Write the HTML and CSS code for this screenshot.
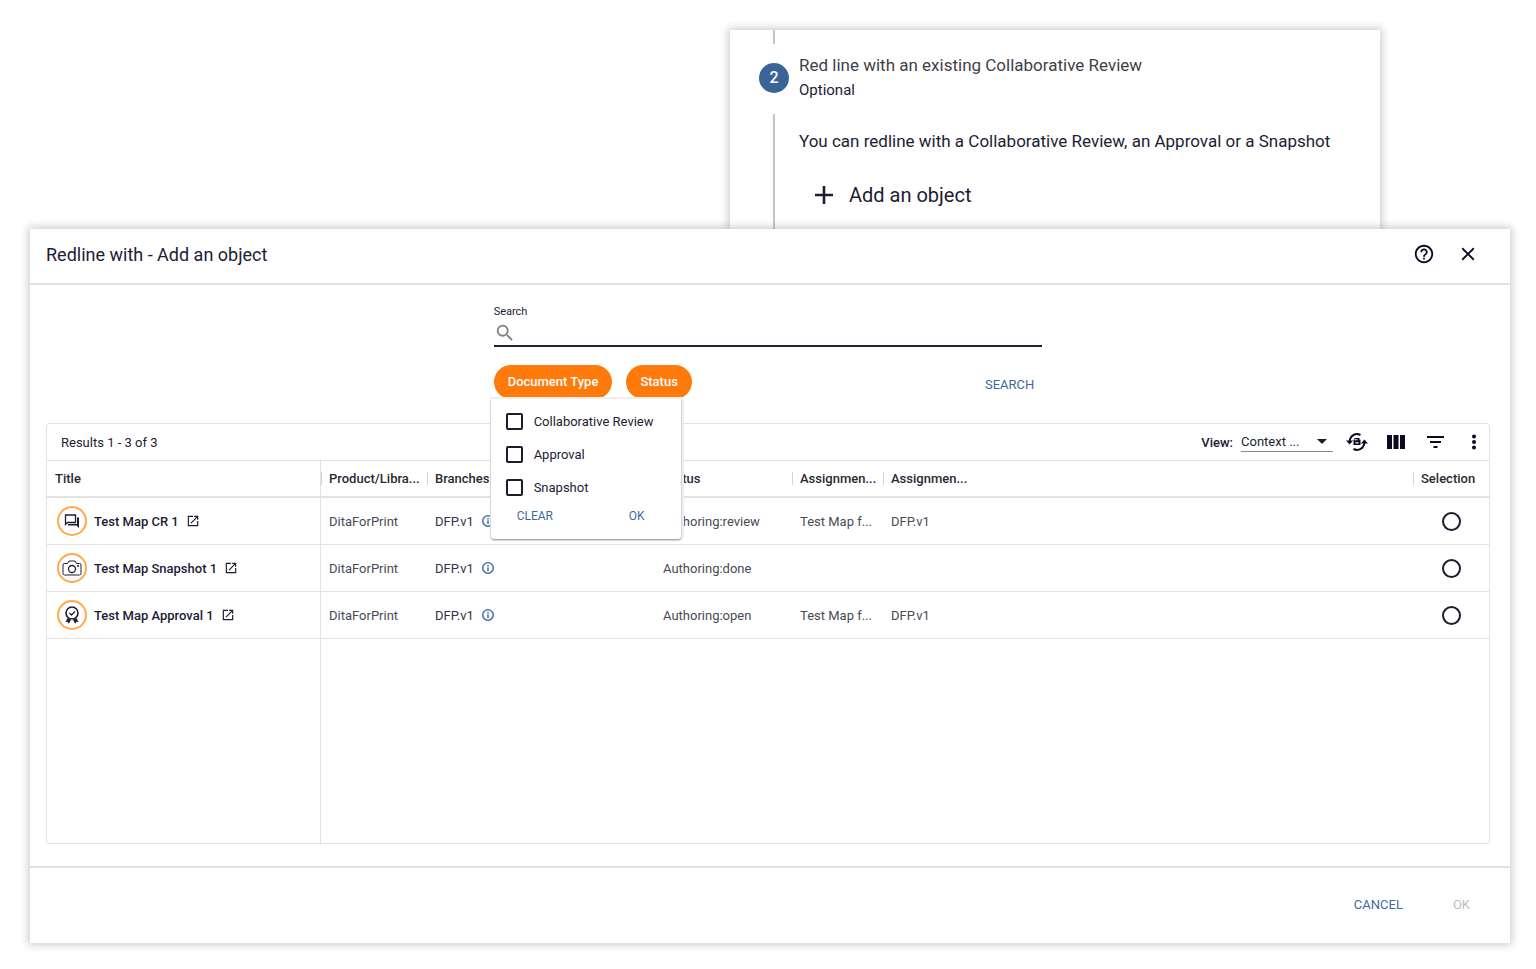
FILE: index.html
```html
<!DOCTYPE html>
<html lang="en">
<head>
    <meta charset="UTF-8">
    <meta name="viewport" content="width=device-width, initial-scale=1.0">
    <title>Redline with - Add an object</title>
    <link rel="stylesheet" href="styles.css">
</head>
<body>
    <svg class="sprite" aria-hidden="true">
        <symbol id="icon-open" viewBox="0 0 24 24">
            <path d="M19 19H5V5h7V3H3v18h18v-9h-2v7zM14 3v2h3.6l-9.8 9.8 1.4 1.4L19 6.400V10h2V3h-7z"/>
        </symbol>
        <symbol id="icon-info" viewBox="0 0 24 24">
            <path d="M11 7h2v2h-2zm0 4h2v6h-2zm1-9C6.500 2 2 6.500 2 12s4.500 10 10 10 10-4.500 10-10S17.500 2 12 2zm0 18c-4.400 0-8-3.600-8-8s3.600-8 8-8 8 3.600 8 8-3.600 8-8 8z" stroke="currentColor" stroke-width=".6"/>
        </symbol>
    </svg>

    <section class="step">
        <div class="step-rail">
            <span class="rail-start"></span>
            <span class="step-number">2</span>
            <span class="rail-end"></span>
        </div>
        <div class="step-content">
            <h2>Red line with an existing Collaborative Review</h2>
            <p class="step-optional">Optional</p>
            <p class="step-text">You can redline with a Collaborative Review, an Approval or a Snapshot</p>
            <button type="button" class="add-button">
                <svg width="18" height="18" viewBox="0 0 18 18"><path d="M9 0v18M0 9h18" stroke="currentColor" stroke-width="2.600"/></svg>
                Add an object
            </button>
        </div>
    </section>

    <main class="dialog">
        <header class="dialog-header">
            <h1>Redline with - Add an object</h1>
            <button type="button" class="icon-button" aria-label="Help">
                <svg width="22" height="22" viewBox="0 0 24 24"><path d="M11 18h2v-2h-2v2zm1-16C6.480 2 2 6.480 2 12s4.480 10 10 10 10-4.480 10-10S17.520 2 12 2zm0 18c-4.410 0-8-3.590-8-8s3.590-8 8-8 8 3.590 8 8-3.590 8-8 8zm0-14c-2.210 0-4 1.790-4 4h2c0-1.100.9-2 2-2s2 .9 2 2c0 2-3 1.750-3 5h2c0-2.250 3-2.500 3-5 0-2.210-1.790-4-4-4z"/></svg>
            </button>
            <button type="button" class="icon-button" aria-label="Close">
                <svg width="22" height="22" viewBox="0 0 24 24"><path d="M19 6.410 17.590 5 12 10.590 6.410 5 5 6.410 10.590 12 5 17.590 6.410 19 12 13.410 17.590 19 19 17.590 13.410 12z"/></svg>
            </button>
        </header>

        <div class="dialog-body">
            <form class="search">
                <label for="search">Search</label>
                <div class="search-field">
                    <svg width="22" height="22" viewBox="0 0 24 24"><path d="M15.500 14h-.79l-.28-.27A6.470 6.470 0 0 0 16 9.500 6.500 6.500 0 1 0 9.500 16c1.610 0 3.090-.59 4.230-1.570l.27.28v.79l5 4.990L20.490 19l-4.990-5zm-6 0C7.010 14 5 11.990 5 9.500S7.010 5 9.500 5 14 7.010 14 9.500 11.990 14 9.500 14z"/></svg>
                    <input type="text" id="search">
                </div>
                <div class="filters">
                    <div class="filter">
                        <button type="button" class="pill">Document Type</button>
                        <div class="menu">
                            <label><input type="checkbox">Collaborative Review</label>
                            <label><input type="checkbox">Approval</label>
                            <label><input type="checkbox">Snapshot</label>
                            <div class="menu-actions">
                                <button type="button" class="link-button">CLEAR</button>
                                <button type="button" class="link-button">OK</button>
                            </div>
                        </div>
                    </div>
                    <button type="button" class="pill">Status</button>
                    <button type="button" class="link-button search-button">SEARCH</button>
                </div>
            </form>

            <section class="results">
                <div class="toolbar">
                    <span class="count">Results 1 - 3 of 3</span>
                    <label class="view-label" for="view">View:</label>
                    <div class="view-select">
                        <select id="view">
                            <option>Context ...</option>
                        </select>
                    </div>
                    <div class="tools">
                        <button type="button" class="icon-button" aria-label="Refresh">
                            <svg width="22" height="18" viewBox="0 0 22 18">
                                <path d="M14.500 2C9.500-.4 4 2.500 3.600 8.500M7.500 16c5 2.400 10.500-.5 10.900-6.500" fill="none" stroke="currentColor" stroke-width="2"/>
                                <path d="M0 7.500h7.200L3.600 11.500zM14.800 10.500H22L18.400 6.500z"/>
                                <path d="M7.500 6.800h7V12h-7zM8.500 5h5v2h-5z"/>
                                <path d="M9.500 9.200h3v1.200h-3zM9 6.300h2.500v.9H9z" fill="#fff"/>
                            </svg>
                        </button>
                        <button type="button" class="icon-button" aria-label="Columns">
                            <svg width="18" height="14" viewBox="0 0 18 14"><path d="M0 0h5v14H0zM6.500 0h5v14h-5zM13 0h5v14h-5z"/></svg>
                        </button>
                        <button type="button" class="icon-button" aria-label="Filter">
                            <svg width="17" height="12" viewBox="0 0 17 12"><path d="M0 0h17v2H0zM3 5h11v2H3zM6.500 10h4v2h-4z"/></svg>
                        </button>
                        <button type="button" class="icon-button" aria-label="More">
                            <svg width="6" height="16" viewBox="0 0 6 16"><circle cx="3" cy="2.500" r="2"/><circle cx="3" cy="8" r="2"/><circle cx="3" cy="13.500" r="2"/></svg>
                        </button>
                    </div>
                </div>

                <div class="table-wrap">
                    <table>
                        <colgroup>
                            <col class="col-title">
                            <col class="col-product">
                            <col class="col-branches">
                            <col class="col-status">
                            <col class="col-assignment">
                            <col>
                            <col class="col-selection">
                        </colgroup>
                        <thead>
                            <tr>
                                <th>Title</th>
                                <th>Product/Libra...</th>
                                <th>Branches</th>
                                <th>Status</th>
                                <th>Assignmen...</th>
                                <th>Assignmen...</th>
                                <th>Selection</th>
                            </tr>
                        </thead>
                        <tbody>
                            <tr>
                                <td>
                                    <a href="#" class="object">
                                        <span class="badge"><svg width="16" height="16" viewBox="0 0 16 16"><path d="M1.500 2h10v7.500h-8l-2 2z" fill="none" stroke="currentColor" stroke-width="1.300"/><path d="M13 4.500h2V15l-2.500-2.500H4v-1.500h9z"/></svg></span>
                                        Test Map CR 1
                                        <svg width="14" height="14"><use href="#icon-open"/></svg>
                                    </a>
                                </td>
                                <td>DitaForPrint</td>
                                <td><span class="branch">DFP.v1 <svg width="14" height="14"><use href="#icon-info"/></svg></span></td>
                                <td>Authoring:review</td>
                                <td>Test Map f...</td>
                                <td>DFP.v1</td>
                                <td><input type="radio" name="selection" aria-label="Test Map CR 1"></td>
                            </tr>
                            <tr>
                                <td>
                                    <a href="#" class="object">
                                        <span class="badge"><svg width="20" height="16" viewBox="0 0 20 16"><path d="M2.500 3.500h3l1.500-2.500h6l1.500 2.500h3q1.500 0 1.500 1.500v8.500q0 1.500-1.500 1.500h-15Q1 15 1 13.500V5q0-1.500 1.500-1.500z" fill="none" stroke="currentColor"/><circle cx="10" cy="9" r="3.500" fill="none" stroke="currentColor" stroke-width="1.300"/><circle cx="16" cy="6" r="1"/></svg></span>
                                        Test Map Snapshot 1
                                        <svg width="14" height="14"><use href="#icon-open"/></svg>
                                    </a>
                                </td>
                                <td>DitaForPrint</td>
                                <td><span class="branch">DFP.v1 <svg width="14" height="14"><use href="#icon-info"/></svg></span></td>
                                <td>Authoring:done</td>
                                <td></td>
                                <td></td>
                                <td><input type="radio" name="selection" aria-label="Test Map Snapshot 1"></td>
                            </tr>
                            <tr>
                                <td>
                                    <a href="#" class="object">
                                        <span class="badge"><svg width="16" height="18" viewBox="0 0 16 18"><circle cx="8" cy="7" r="6" fill="none" stroke="currentColor" stroke-width="1.600"/><path d="M5.500 7l2 2 3.500-3.500" fill="none" stroke="currentColor" stroke-width="1.300"/><path d="M3.500 12l-2 4 2-.2 1.300 1.900 2.200-4zM12.500 12l2 4-2-.2-1.300 1.900-2.200-4z"/></svg></span>
                                        Test Map Approval 1
                                        <svg width="14" height="14"><use href="#icon-open"/></svg>
                                    </a>
                                </td>
                                <td>DitaForPrint</td>
                                <td><span class="branch">DFP.v1 <svg width="14" height="14"><use href="#icon-info"/></svg></span></td>
                                <td>Authoring:open</td>
                                <td>Test Map f...</td>
                                <td>DFP.v1</td>
                                <td><input type="radio" name="selection" aria-label="Test Map Approval 1"></td>
                            </tr>
                            <tr class="filler">
                                <td></td>
                                <td colspan="6"></td>
                            </tr>
                        </tbody>
                    </table>
                </div>
            </section>
        </div>

        <footer class="dialog-footer">
            <button type="button" class="link-button">CANCEL</button>
            <button type="button" class="link-button" disabled>OK</button>
        </footer>
    </main>
</body>
</html>
```

FILE: styles.css
```css
* {
    box-sizing: border-box;
}

body {
    display: flex;
    flex-direction: column;
    min-height: 100vh;
    margin: 0;
    padding: 30px 26px 26px 30px;
    background-color: #fff;
    color: #1d1c35;
    font-family: Roboto, "Liberation Sans", sans-serif;
    font-size: 13px;
}

h1, h2, p {
    margin: 0;
    font-weight: 400;
}

button, input, select {
    margin: 0;
    padding: 0;
    border: none;
    background: none;
    color: inherit;
    font: inherit;
}

button {
    cursor: pointer;
}

svg {
    display: block;
    flex: none;
    fill: currentColor;
}

.sprite {
    position: absolute;
    width: 0;
    height: 0;
}

/* Stepper card */
.step {
    display: flex;
    gap: 10px;
    width: 100%;
    max-width: 650px;
    margin-left: auto;
    margin-right: 130px;
    padding-left: 29px;
    box-shadow: 0 0 8px 2px rgba(0, 0, 0, 0.2);
}

.step-rail {
    display: flex;
    flex-direction: column;
    align-items: center;
    width: 30px;
}

.rail-start, .rail-end {
    width: 2px;
    background-color: #c4c4c4;
}

.rail-start {
    height: 14px;
}

.rail-end {
    flex: 1;
}

.step-number {
    width: 30px;
    height: 30px;
    margin: 19px 0 21px;
    border-radius: 50%;
    background-color: #3b6496;
    color: #fff;
    font-size: 16px;
    font-weight: 500;
    line-height: 30px;
    text-align: center;
}

.step-content {
    padding: 22px 0 17px;
}

.step-content h2 {
    color: #3f3f48;
    font-size: 17px;
    line-height: 26px;
}

.step-optional {
    font-size: 15px;
    line-height: 24px;
}

.step-text {
    margin-top: 26px;
    font-size: 17px;
    line-height: 26px;
}

.add-button {
    display: flex;
    align-items: center;
    gap: 16px;
    height: 34px;
    margin-top: 24px;
    padding: 0 16px;
    font-size: 20px;
}

/* Dialog */
.dialog {
    position: relative;
    display: flex;
    flex: 1;
    flex-direction: column;
    background-color: #fff;
    box-shadow: 0 0 8px 2px rgba(0, 0, 0, 0.2);
}

.dialog-header {
    display: flex;
    align-items: center;
    gap: 22px;
    height: 56px;
    padding: 0 31px 4px 16px;
    border-bottom: 2px solid #e2e2e2;
}

.dialog-header h1 {
    flex: 1;
    font-size: 18px;
}

.dialog-body {
    display: flex;
    flex: 1;
    flex-direction: column;
    padding: 19px 20px 22px 16px;
}

.link-button {
    color: #3f6a9f;
    font-size: 13px;
}

.link-button:disabled {
    color: #bdbdbd;
}

.search {
    width: 38%;
    margin: 0 auto 24px;
}

.search > label {
    display: block;
    font-size: 11px;
    line-height: 16px;
}

.search-field {
    display: flex;
    align-items: center;
    height: 27px;
    margin-bottom: 18px;
    border-bottom: 2px solid #23212f;
}

.search-field svg {
    color: #808080;
}

.search-field input {
    flex: 1;
    height: 24px;
    outline: none;
}

.filters {
    display: flex;
    align-items: center;
    gap: 14px;
}

.filter {
    position: relative;
}

.pill {
    display: block;
    height: 34px;
    padding: 0 14px 2px;
    border-radius: 17px;
    background-color: #ff7a0a;
    color: #fff;
    font-weight: 500;
}

.search-button {
    margin-left: auto;
    padding: 4px 8px 0;
}

.menu {
    position: absolute;
    top: 100%;
    left: -3px;
    z-index: 1;
    width: 190px;
    height: 140px;
    padding: 6px 15px;
    border-radius: 0 0 3px 3px;
    background-color: #fff;
    box-shadow: 0 1px 2px rgba(0, 0, 0, 0.4), 1px 0 0 2px #f1f1f1;
}

.menu label {
    display: flex;
    align-items: center;
    gap: 11px;
    height: 33px;
    white-space: nowrap;
}

.menu input {
    appearance: none;
    width: 17px;
    height: 17px;
    border: 2px solid #1d1c2f;
    border-radius: 2px;
}

.menu-actions {
    display: flex;
    justify-content: space-between;
    padding: 5px 21px 0 11px;
}

.menu .link-button {
    font-size: 12px;
}

/* Results */
.results {
    display: flex;
    flex: 1;
    flex-direction: column;
    border: 1px solid #e2e2e2;
    border-radius: 4px;
}

.toolbar {
    display: flex;
    align-items: center;
    height: 37px;
    padding: 0 4px 0 14px;
    border-bottom: 1px solid #e2e2e2;
}

.count {
    flex: 1;
}

.view-label {
    margin-right: 8px;
    font-weight: 500;
}

.view-select {
    display: flex;
    align-items: center;
    width: 92px;
    height: 20px;
    margin-right: 13px;
    border-bottom: 1px solid #8c8c94;
}

.view-select select {
    appearance: none;
    flex: 1;
    min-width: 0;
}

.view-select::after {
    content: "";
    margin-right: 6px;
    border: 5px solid transparent;
    border-top-color: #1d1c2f;
    border-bottom: none;
}

.tools {
    display: flex;
    align-items: center;
    gap: 17px;
}

.tools .icon-button {
    display: flex;
    justify-content: center;
    width: 22px;
}

.icon-button {
    color: #0c0a20;
}

.table-wrap {
    display: flex;
    flex: 1;
}

table {
    width: 100%;
    border-collapse: separate;
    border-spacing: 0;
    table-layout: fixed;
}

.col-title {
    width: 274px;
}

.col-product {
    width: 106px;
}

.col-branches {
    width: 228px;
}

.col-status {
    width: 137px;
}

.col-assignment {
    width: 91px;
}

.col-selection {
    width: 76px;
}

th, td {
    padding: 0 0 0 8px;
    overflow: hidden;
    text-align: left;
    white-space: nowrap;
}

th {
    height: 37px;
    border-bottom: 2px solid #e2e2e2;
    color: #2a2a33;
    font-weight: 500;
    background: linear-gradient(#d5d5d5, #d5d5d5) left center / 1px 13px no-repeat;
}

td {
    height: 47px;
    border-bottom: 1px solid #e2e2e2;
    color: #4a4a55;
}

th:first-child, td:first-child {
    border-right: 1px solid #e2e2e2;
    background: none;
}

th:nth-child(4) {
    background: none;
}

.filler td {
    height: auto;
    border-bottom: none;
}

.object {
    display: flex;
    align-items: center;
    gap: 7px;
    padding-left: 2px;
    color: #1d1c35;
    font-weight: 500;
    text-decoration: none;
}

.badge {
    display: flex;
    align-items: center;
    justify-content: center;
    width: 30px;
    height: 30px;
    border: 2px solid #ffa84d;
    border-radius: 50%;
}

.branch {
    display: flex;
    align-items: center;
    gap: 7px;
    color: #33324a;
}

.branch svg {
    color: #3f6a9f;
}

td input {
    appearance: none;
    display: block;
    width: 19px;
    height: 19px;
    margin-left: 21px;
    border: 2px solid #1d1c2f;
    border-radius: 50%;
}

.dialog-footer {
    display: flex;
    align-items: center;
    justify-content: flex-end;
    gap: 50px;
    height: 77px;
    padding: 0 40px 2px 0;
    border-top: 2px solid #e2e2e2;
}
```
